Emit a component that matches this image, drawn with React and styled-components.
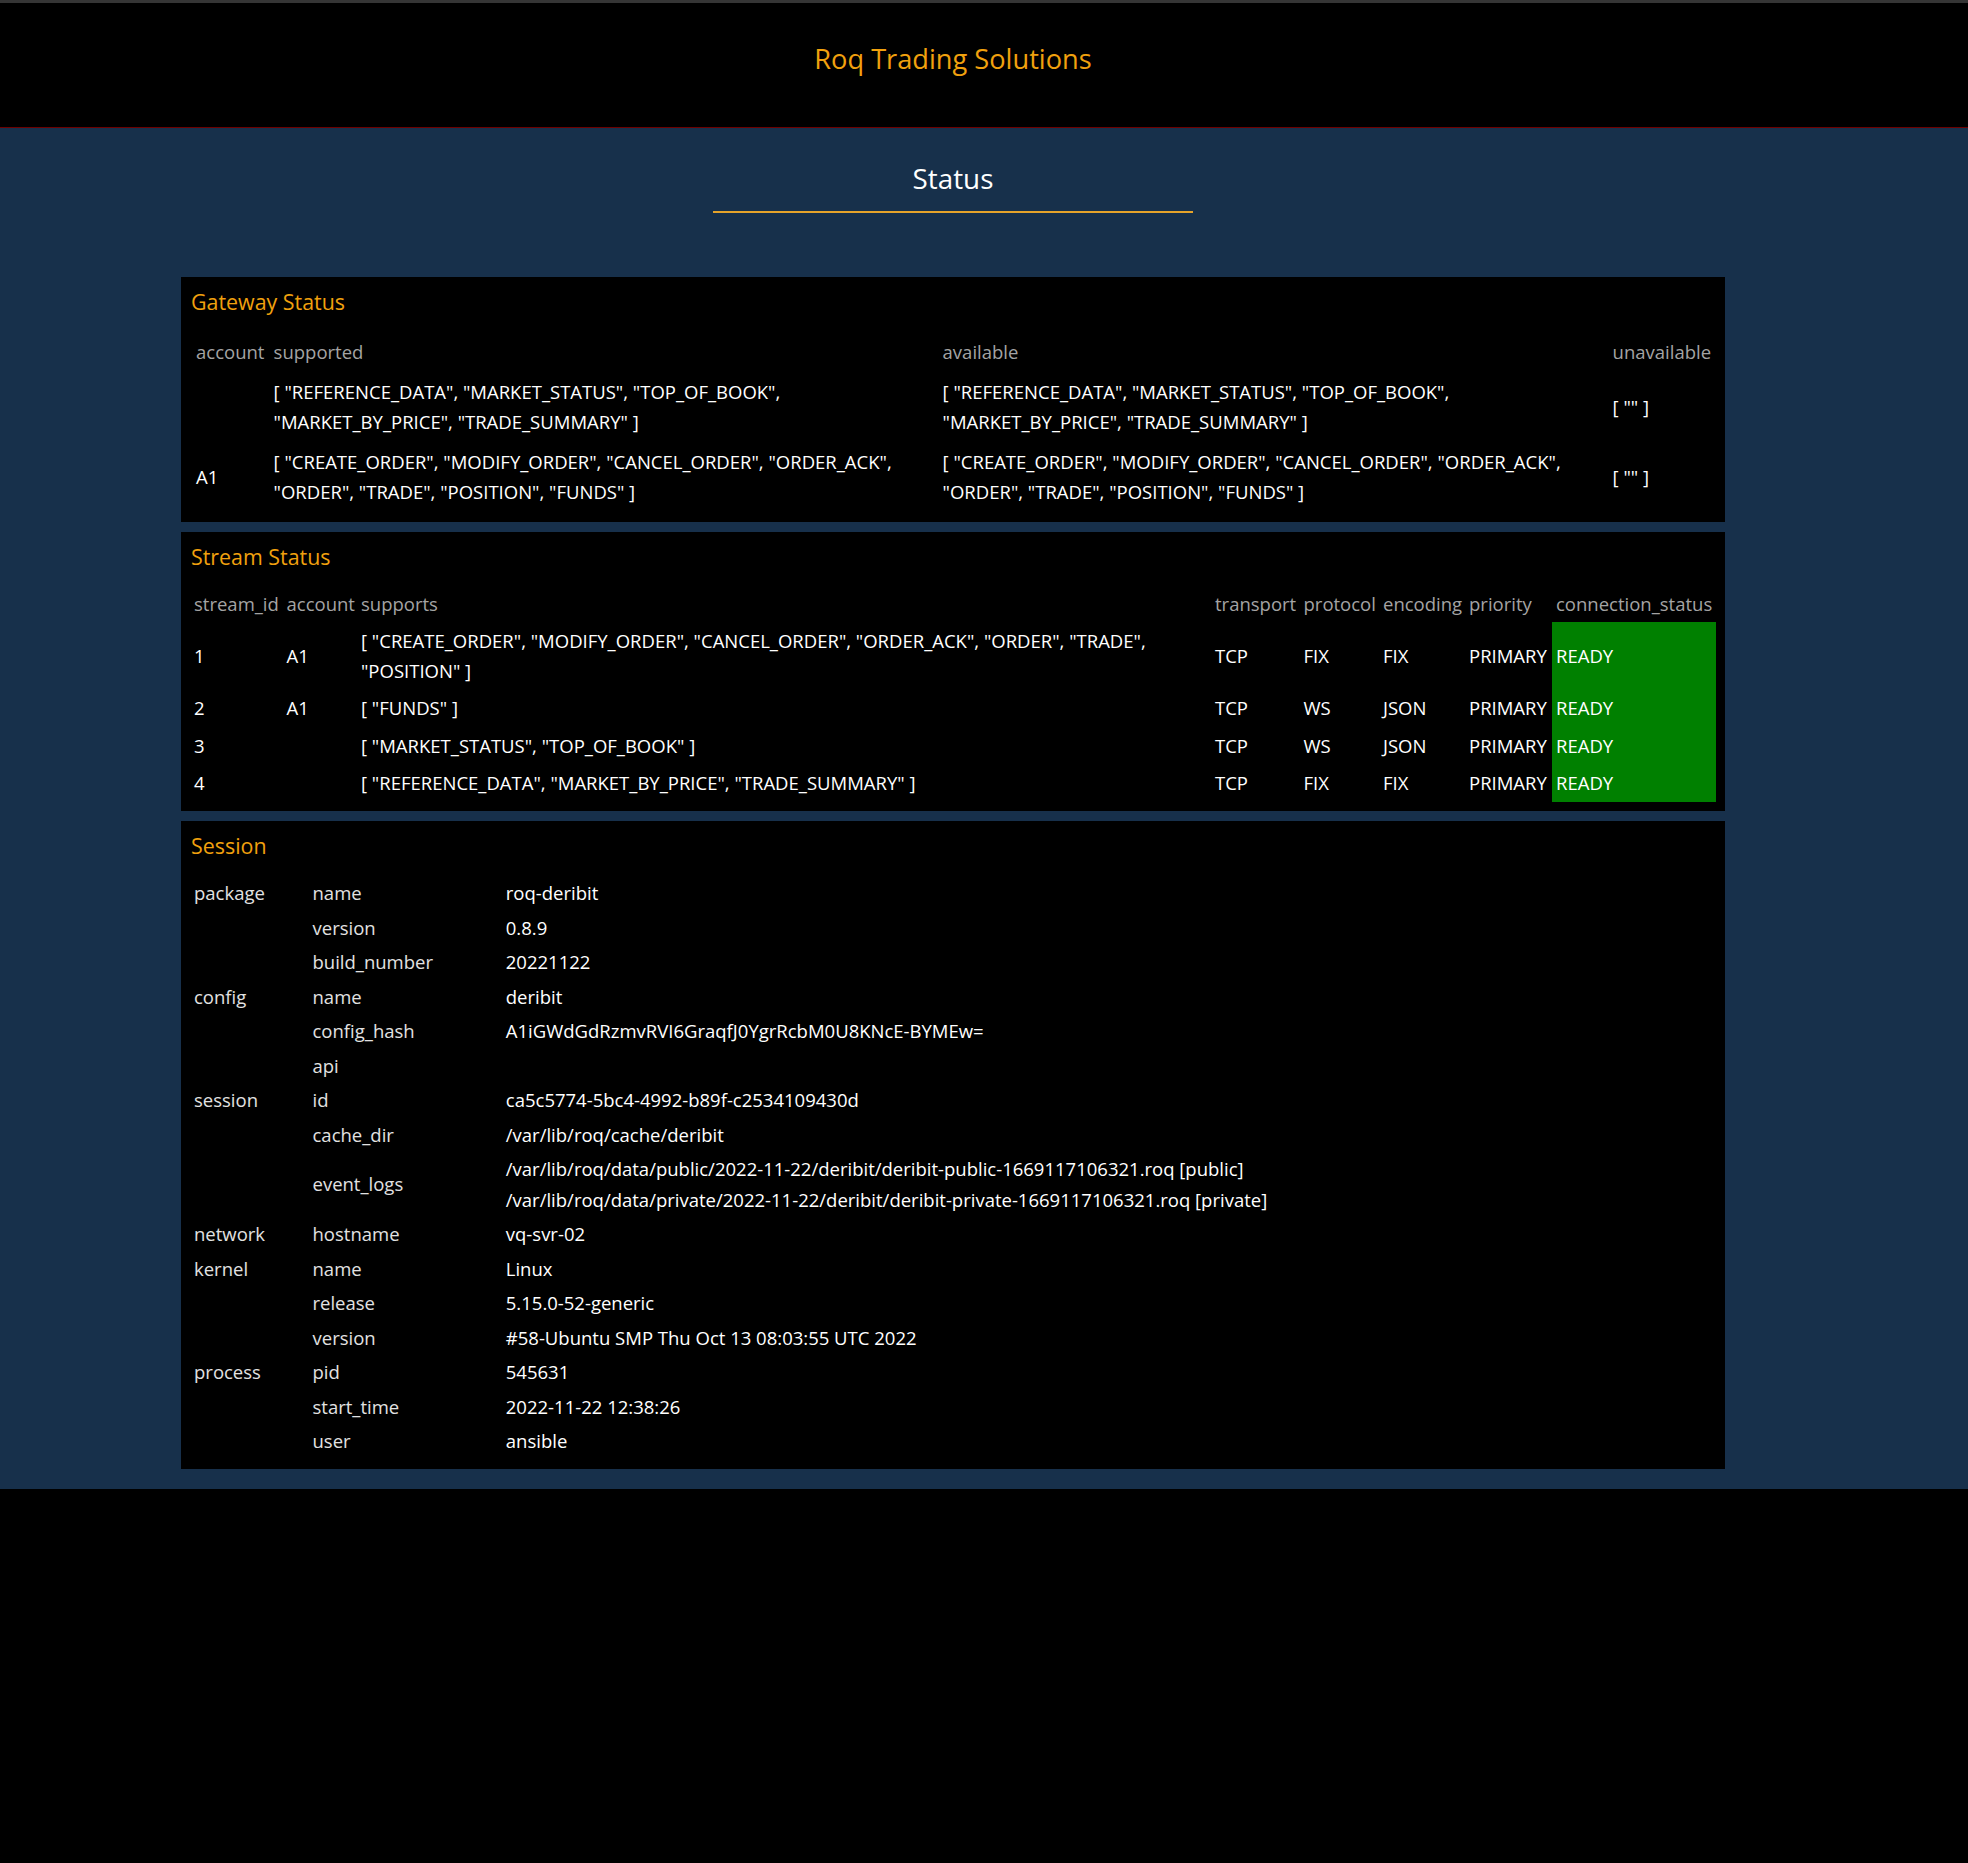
import React from 'react';
import styled, { createGlobalStyle } from 'styled-components';

const GlobalStyle = createGlobalStyle`
  * { box-sizing: border-box; }
  html, body {
    margin: 0;
    padding: 0;
    background: #000;
  }
  body {
    font-family: "Open Sans", "Noto Sans", "DejaVu Sans", sans-serif;
    font-size: 18.5px;
    color: #fff;
  }
`;

// ---- layout
const Page = styled.div`
  min-height: 1863px;
  background: #000;
`;

const TopBar = styled.header`
  height: 128px;
  border-top: 3px solid #353535;
  border-bottom: 1px solid #6e0000;
  background: #000;
  display: flex;
  align-items: center;
`;

const Inner = styled.div`
  width: 1906px;
  text-align: ${p => p.$align || 'left'};
`;

const Brand = styled.h1`
  margin: 0;
  padding-bottom: 13px;
  font-size: 27.2px;
  font-weight: 400;
  color: #f1a10e;
  text-align: center;
`;

const Content = styled.main`
  background: #17304b;
  padding: 32px 0 20px;
`;

const Heading = styled.h2`
  margin: 0;
  font-size: 27.8px;
  line-height: 36px;
  font-weight: 400;
  color: #fff;
  text-align: center;
`;

const Rule = styled.div`
  width: 480px;
  height: 2px;
  margin: 15px auto 64px;
  background: #e5a32a;
`;

const Panel = styled.section`
  width: 1544px;
  margin: 0 auto 10px;
  padding: 10px 9px 9px;
  background: #000;
  &:last-child { margin-bottom: 0; }
`;

const PanelTitle = styled.h3`
  margin: 0 0 14px;
  padding-left: 1px;
  font-size: 21.4px;
  line-height: 30px;
  font-weight: 400;
  color: #f1a10e;
`;

// ---- tables
const Table = styled.table`
  width: 100%;
  table-layout: fixed;
  border-collapse: ${p => (p.$collapse ? 'collapse' : 'separate')};
  border-spacing: 2px;
  line-height: ${p => p.$lh || 30}px;
`;

const Th = styled.th`
  width: ${p => (p.$w ? `${p.$w}px` : 'auto')};
  padding: ${p => p.$pad || '4px'};
  text-align: left;
  font-weight: 400;
  color: #a4a4a4;
  white-space: nowrap;
`;

const Td = styled.td`
  width: ${p => (p.$w ? `${p.$w}px` : 'auto')};
  padding: ${p => p.$pad || '4px'};
  text-align: left;
  vertical-align: middle;
  color: ${p => p.$tone || '#fff'};
  background: ${p => (p.$ok ? '#008000' : 'transparent')};
`;

const Line = styled.div`
  white-space: nowrap;
`;

// ---- data
const list = items => `[ ${items.map(i => `"${i}"`).join(', ')} ]`;

const marketData = ['REFERENCE_DATA', 'MARKET_STATUS', 'TOP_OF_BOOK', 'MARKET_BY_PRICE', 'TRADE_SUMMARY'];
const orderData = ['CREATE_ORDER', 'MODIFY_ORDER', 'CANCEL_ORDER', 'ORDER_ACK', 'ORDER', 'TRADE', 'POSITION', 'FUNDS'];

const gateway = [
  { account: '', supported: marketData, available: marketData, unavailable: [''] },
  { account: 'A1', supported: orderData, available: orderData, unavailable: [''] },
];

const streams = [
  { id: 1, account: 'A1', supports: ['CREATE_ORDER', 'MODIFY_ORDER', 'CANCEL_ORDER', 'ORDER_ACK', 'ORDER', 'TRADE', 'POSITION'], transport: 'TCP', protocol: 'FIX', encoding: 'FIX' },
  { id: 2, account: 'A1', supports: ['FUNDS'], transport: 'TCP', protocol: 'WS', encoding: 'JSON' },
  { id: 3, account: '', supports: ['MARKET_STATUS', 'TOP_OF_BOOK'], transport: 'TCP', protocol: 'WS', encoding: 'JSON' },
  { id: 4, account: '', supports: ['REFERENCE_DATA', 'MARKET_BY_PRICE', 'TRADE_SUMMARY'], transport: 'TCP', protocol: 'FIX', encoding: 'FIX' },
];

const session = [
  ['package', 'name', 'roq-deribit'],
  ['', 'version', '0.8.9'],
  ['', 'build_number', '20221122'],
  ['config', 'name', 'deribit'],
  ['', 'config_hash', 'A1iGWdGdRzmvRVI6GraqfJ0YgrRcbM0U8KNcE-BYMEw='],
  ['', 'api', ''],
  ['session', 'id', 'ca5c5774-5bc4-4992-b89f-c2534109430d'],
  ['', 'cache_dir', '/var/lib/roq/cache/deribit'],
  ['', 'event_logs', [
    '/var/lib/roq/data/public/2022-11-22/deribit/deribit-public-1669117106321.roq [public]',
    '/var/lib/roq/data/private/2022-11-22/deribit/deribit-private-1669117106321.roq [private]',
  ]],
  ['network', 'hostname', 'vq-svr-02'],
  ['kernel', 'name', 'Linux'],
  ['', 'release', '5.15.0-52-generic'],
  ['', 'version', '#58-Ubuntu SMP Thu Oct 13 08:03:55 UTC 2022'],
  ['process', 'pid', '545631'],
  ['', 'start_time', '2022-11-22 12:38:26'],
  ['', 'user', 'ansible'],
];

// ---- sections
const GatewayStatus = () => (
  <Panel>
    <PanelTitle>Gateway Status</PanelTitle>
    <Table>
      <thead>
        <tr>
          <Th $w={75.6}>account</Th>
          <Th $w={667}>supported</Th>
          <Th $w={668}>available</Th>
          <Th>unavailable</Th>
        </tr>
      </thead>
      <tbody>
        {gateway.map((row, i) => (
          <tr key={i}>
            <Td>{row.account}</Td>
            <Td>{list(row.supported)}</Td>
            <Td>{list(row.available)}</Td>
            <Td>{list(row.unavailable)}</Td>
          </tr>
        ))}
      </tbody>
    </Table>
  </Panel>
);

const StreamStatus = () => (
  <Panel>
    <PanelTitle>Stream Status</PanelTitle>
    <Table $collapse>
      <thead>
        <tr>
          <Th $w={92.5} $pad="3px 4px">stream_id</Th>
          <Th $w={74.5} $pad="3px 4px">account</Th>
          <Th $w={854} $pad="3px 4px">supports</Th>
          <Th $w={88.5} $pad="3px 4px">transport</Th>
          <Th $w={79.5} $pad="3px 4px">protocol</Th>
          <Th $w={86} $pad="3px 4px">encoding</Th>
          <Th $w={87} $pad="3px 4px">priority</Th>
          <Th $pad="3px 4px">connection_status</Th>
        </tr>
      </thead>
      <tbody>
        {streams.map(s => (
          <tr key={s.id}>
            <Td $pad="3.75px 4px">{s.id}</Td>
            <Td $pad="3.75px 4px">{s.account}</Td>
            <Td $pad="3.75px 4px">{list(s.supports)}</Td>
            <Td $pad="3.75px 4px">{s.transport}</Td>
            <Td $pad="3.75px 4px">{s.protocol}</Td>
            <Td $pad="3.75px 4px">{s.encoding}</Td>
            <Td $pad="3.75px 4px">PRIMARY</Td>
            <Td $pad="3.75px 4px" $ok>READY</Td>
          </tr>
        ))}
      </tbody>
    </Table>
  </Panel>
);

const Session = () => (
  <Panel>
    <PanelTitle>Session</PanelTitle>
    <Table $lh={30.5}>
      <tbody>
        {session.map(([group, key, value], i) => (
          <tr key={i}>
            <Td $w={116.5} $pad="1px 2px" $tone="#e2e2e2">{group}</Td>
            <Td $w={191.3} $pad="1px 2px" $tone="#e2e2e2">{key}</Td>
            <Td $pad="1px 2px">
              {Array.isArray(value) ? value.map(v => <Line key={v}>{v}</Line>) : value}
            </Td>
          </tr>
        ))}
      </tbody>
    </Table>
  </Panel>
);

export default function App() {
  return (
    <Page>
      <GlobalStyle />
      <TopBar>
        <Inner $align="center">
          <Brand>Roq Trading Solutions</Brand>
        </Inner>
      </TopBar>
      <Content>
        <Inner>
          <Heading>Status</Heading>
          <Rule />
          <GatewayStatus />
          <StreamStatus />
          <Session />
        </Inner>
      </Content>
    </Page>
  );
}
